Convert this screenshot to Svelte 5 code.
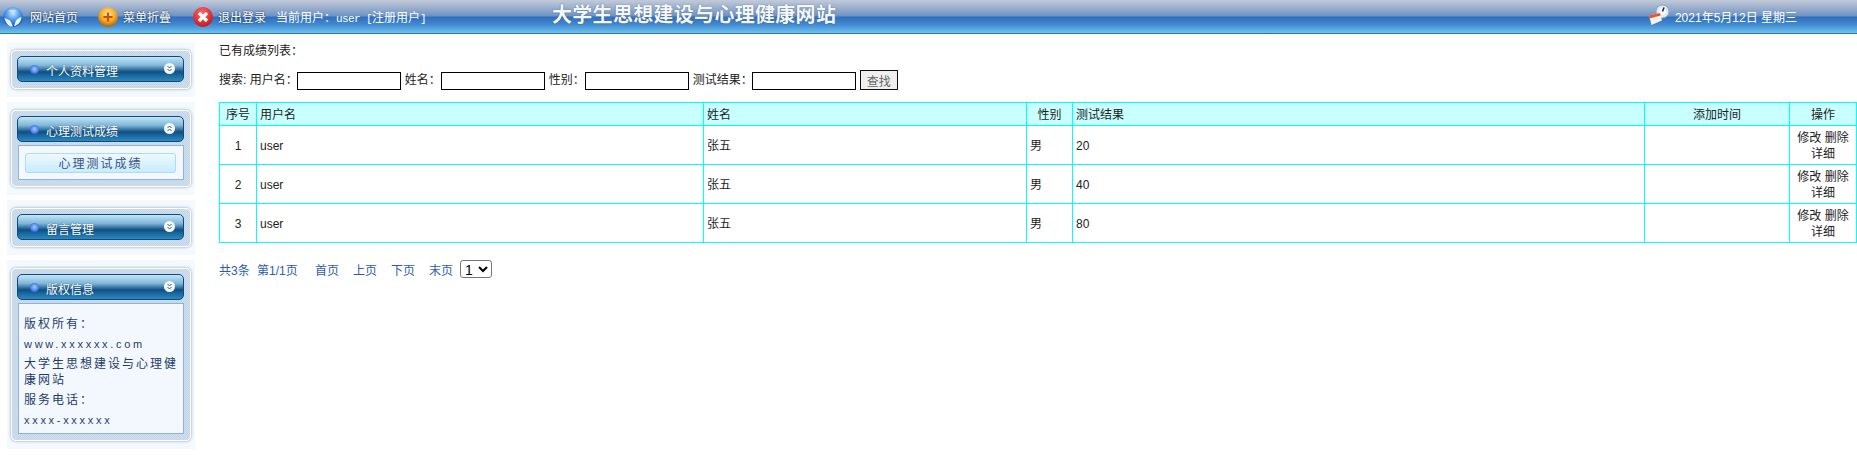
<script>
  let rows = [
    { id: 1, name: 'user', real: '张五', sex: '男', score: 20 },
    { id: 2, name: 'user', real: '张五', sex: '男', score: 40 },
    { id: 3, name: 'user', real: '张五', sex: '男', score: 80 }
  ];
</script>

{#snippet panelHead(title, up)}
  <div class="panel-head">
    <span class="dot"></span>
    <span class="panel-title">{title}</span>
    <svg class="chev" width="11" height="11" viewBox="0 0 11 11">
      <circle cx="5.5" cy="5.5" r="5.5" fill="#f4f8fb" />
      {#if up}
        <path d="M3.5 5 5.5 3 7.5 5M3.5 8 5.5 6 7.5 8" fill="none" stroke="#2f5f86" stroke-width="1" />
      {:else}
        <path d="M3.5 3 5.5 5 7.5 3M3.5 6 5.5 8 7.5 6" fill="none" stroke="#2f5f86" stroke-width="1" />
      {/if}
    </svg>
  </div>
{/snippet}

<header class="top">
  <nav class="nav">
    <a class="nav-item first" href="#home">
      <svg width="20" height="20" viewBox="0 0 20 20">
        <defs>
          <radialGradient id="globe" cx="0.5" cy="0.3" r="0.75">
            <stop offset="0" stop-color="#cfe8ff" />
            <stop offset="0.45" stop-color="#4f9cf0" />
            <stop offset="1" stop-color="#0d3aa6" />
          </radialGradient>
        </defs>
        <circle cx="10" cy="10" r="10" fill="url(#globe)" />
        <path d="M1.5 11c2.500 1 5 1.500 6.500 4l2 4.500c-3.500 .5-7-2-8.500-8.500Z" fill="#e8f3ff" />
        <path d="M18.500 10c-2 .5-4 1.500-5.500 3.500l-2 5.500c4-.5 7-4 7.500-9Z" fill="#e8f3ff" />
        <path d="M5 4c2-1.500 7-1.500 9 0-2 1-7 1-9 0Z" fill="#f4fbff" opacity=".6" />
      </svg>
      <span>网站首页</span>
    </a>
    <a class="nav-item second" href="#fold">
      <svg width="20" height="20" viewBox="0 0 20 20">
        <defs>
          <radialGradient id="orange" cx="0.5" cy="0.35" r="0.7">
            <stop offset="0" stop-color="#ffe9a0" />
            <stop offset="0.55" stop-color="#f5a623" />
            <stop offset="1" stop-color="#9a5208" />
          </radialGradient>
        </defs>
        <circle cx="10" cy="10" r="10" fill="url(#orange)" />
        <path d="M10 5.500v9M5.500 10h9" stroke="#c4540a" stroke-width="2.200" />
      </svg>
      <span>菜单折叠</span>
    </a>
    <a class="nav-item third" href="#logout">
      <svg width="20" height="20" viewBox="0 0 20 20">
        <defs>
          <radialGradient id="red" cx="0.45" cy="0.3" r="0.8">
            <stop offset="0" stop-color="#ff6a6a" />
            <stop offset="1" stop-color="#c00a14" />
          </radialGradient>
        </defs>
        <circle cx="10" cy="10" r="10" fill="url(#red)" />
        <path d="M6 6l8 8M14 6l-8 8" stroke="#fff" stroke-width="3.200" />
      </svg>
      <span>退出登录</span>
    </a>
    <span class="who">当前用户：<span class="mono">user [</span>注册用户<span class="mono">]</span></span>
  </nav>
  <div class="site-title">大学生思想建设与心理健康网站</div>
  <div class="date">
    <svg width="22" height="22" viewBox="0 0 22 22">
      <circle cx="14.500" cy="7.500" r="6.500" fill="#dfe9f2" stroke="#8fa8bf" />
      <circle cx="14.500" cy="7.500" r="3.500" fill="#f7fbff" />
      <path d="M14.500 7.500 16 3.500" stroke="#223" stroke-width="1.500" />
      <path d="M1 11.500 12 9l2 7.500-10.500 4.500Z" fill="#f4f2ec" />
      <path d="M1 11.500 12 9l.7 2.600L1.700 14.500Z" fill="#e8562a" />
    </svg>
    <span>2021年5月12日 星期三</span>
  </div>
</header>

<div class="page">
  <aside class="side">
    <section class="panel">
      <div class="panel-inner">{@render panelHead('个人资料管理', false)}</div>
    </section>
    <section class="panel">
      <div class="panel-inner">
        {@render panelHead('心理测试成绩', true)}
        <div class="panel-body links">
          <a class="side-link" href="#score">心理测试成绩</a>
        </div>
      </div>
    </section>
    <section class="panel">
      <div class="panel-inner">{@render panelHead('留言管理', false)}</div>
    </section>
    <section class="panel">
      <div class="panel-inner">
        {@render panelHead('版权信息', false)}
        <div class="panel-body info">
          <p>版权所有：</p>
          <p class="latin">www.xxxxxx.com</p>
          <p class="wrap">大学生思想建设与心理健康网站</p>
          <p>服务电话：</p>
          <p class="latin">xxxx-xxxxxx</p>
        </div>
      </div>
    </section>
  </aside>

  <main class="content">
    <div class="caption">已有成绩列表：</div>
    <form class="search">
      <label>搜索: 用户名：<input class="tight" type="text" /></label>
      <label>姓名：<input type="text" /></label>
      <label>性别：<input type="text" /></label>
      <label>测试结果：<input class="tight" type="text" /></label>
      <button type="button">查找</button>
    </form>

    <table>
      <colgroup>
        <col style="width:37px" />
        <col style="width:447px" />
        <col style="width:323px" />
        <col style="width:46px" />
        <col style="width:572px" />
        <col style="width:145px" />
        <col style="width:67px" />
      </colgroup>
      <thead>
        <tr>
          <th class="center">序号</th>
          <th>用户名</th>
          <th>姓名</th>
          <th class="center">性别</th>
          <th>测试结果</th>
          <th class="center">添加时间</th>
          <th class="center">操作</th>
        </tr>
      </thead>
      <tbody>
        {#each rows as row}
          <tr>
            <td class="center">{row.id}</td>
            <td>{row.name}</td>
            <td>{row.real}</td>
            <td>{row.sex}</td>
            <td>{row.score}</td>
            <td></td>
            <td class="center ops">修改 删除 详细</td>
          </tr>
        {/each}
      </tbody>
    </table>

    <div class="pager">
      <span class="count">共3条</span>
      <span class="page-no">第1/1页</span>
      <a href="#first">首页</a>
      <a href="#prev">上页</a>
      <a href="#next">下页</a>
      <a href="#last">末页</a>
      <select>
        <option>1</option>
      </select>
    </div>
  </main>
</div>

<style>
  :global(body) {
    margin: 0;
    background: #fff;
    color: #222;
    font-family: "Liberation Sans", "Noto Sans CJK SC", sans-serif;
    font-size: 12px;
  }

  /* top bar */
  .top {
    height: 33px;
    display: flex;
    align-items: center;
    border-bottom: 1px solid #2f7f8f;
    background: linear-gradient(180deg, #c3cad9 0, #6f92c3 16px, #2f6fbf 17px, #3f86cf 24px, #6cc3ef 33px);
  }

  .nav {
    display: flex;
    align-items: center;
    width: 552px;
    flex: none;
    color: #fff;
  }

  .nav-item {
    display: flex;
    align-items: center;
    color: #fff;
    text-decoration: none;
    text-shadow: 0 0 2px #123;
  }

  .nav-item svg { flex: none; }

  .first { margin-left: 3px; gap: 7px; width: 95px; }
  .second { gap: 5px; width: 95px; }
  .third { gap: 5px; width: 83px; }

  .who { white-space: pre; }
  .mono { font-family: "Liberation Mono", monospace; font-size: 11px; letter-spacing: -0.6px; }

  .site-title {
    font-size: 20px;
    letter-spacing: 0.3px;
    font-weight: 700;
    color: #f4f8fc;
    white-space: nowrap;
    line-height: 1;
    margin-top: -3px;
    text-shadow: 0 0 1px #345;
  }

  .date {
    margin-left: auto;
    margin-right: 60px;
    display: flex;
    align-items: center;
    gap: 5px;
    color: #fff;
    white-space: pre;
  }

  .date svg { margin-top: -4px; }

  .page {
    display: flex;
    align-items: flex-start;
  }

  /* left column */
  .side {
    width: 188px;
    flex: none;
    margin: 8px 0 0 7px;
    display: flex;
    flex-direction: column;
    gap: 5px;
  }

  .panel {
    background: #f3f9fe;
    padding: 8px 4px;
  }

  .panel-inner {
    padding: 5px 6px 6px 5px;
    border: 1px solid #fff;
    border-radius: 5px;
    box-shadow: 0 0 3px #8b97a5;
    background: repeating-conic-gradient(#c2d5e9 0 25%, #d0dfee 0 50%) 0 0 / 2px 2px;
  }

  .panel-head {
    height: 24px;
    display: flex;
    align-items: center;
    padding: 0 8px 0 12px;
    border: 1px solid #0d4a7d;
    border-radius: 5px;
    background: linear-gradient(180deg, #c2e6f6 0, #7fb6d8 35%, #0f4f83 62%, #1a6aa0 78%, #2b88bf 100%);
  }

  .dot {
    width: 9px;
    height: 9px;
    border-radius: 50%;
    background: radial-gradient(circle at 50% 45%, #a8cdfb 0, #5a90f2 45%, #1d3fc4 100%);
    flex: none;
  }

  .panel-title {
    margin-left: 7px;
    color: #fff;
    line-height: 1;
    margin-top: 6px;
    text-shadow: 0 0 1px #0b3a60;
  }

  .chev { margin-left: auto; margin-top: -1px; flex: none; }

  .panel-body {
    margin: 3px 0 0 1px;
    background: #f3f8ff;
    border: 1px solid #8fb3d4;
    box-sizing: border-box;
  }

  .links { height: 35px; padding: 7px 7px 6px 6px; }

  .side-link {
    display: block;
    height: 20px;
    line-height: 21px;
    box-sizing: border-box;
    border: 1px solid #abdcf6;
    border-radius: 3px;
    background: linear-gradient(180deg, #eef9fe, #c8ecfb);
    text-align: center;
    color: #3a4f8c;
    letter-spacing: 2px;
    text-decoration: none;
  }

  .info {
    height: 131px;
    padding: 12px 0 0 5px;
    color: #1f3c68;
    letter-spacing: 2px;
  }

  .info p { margin: 0 0 4px; line-height: 16px; }
  .info .latin { margin: 4px 0 4px; font-size: 11px; letter-spacing: 2.7px; }

  /* right content */
  .content {
    width: 1638px;
    margin-left: 24px;
  }

  .caption {
    margin-top: 9px;
    height: 16px;
    line-height: 16px;
  }

  .search {
    display: flex;
    align-items: flex-end;
    gap: 4px;
    margin-top: 11px;
    height: 20px;
  }

  .search label {
    display: flex;
    align-items: flex-start;
    line-height: 16px;
    white-space: nowrap;
  }

  .search input {
    width: 104px;
    height: 18px;
    box-sizing: border-box;
    border: 1px solid #000;
    border-radius: 0;
    margin: 0;
    padding: 0 2px;
    background: #fff;
  }

  .search input.tight { margin-left: -1px; }

  .search button {
    width: 38px;
    height: 20px;
    padding: 0;
    box-sizing: border-box;
    border: 1px solid #111;
    background: #efefef;
    color: #666;
    font: inherit;
  }

  table {
    margin-top: 12px;
    width: 1638px;
    table-layout: fixed;
    border-collapse: collapse;
    border: 1px solid #00ffff;
  }

  th, td {
    border: 1px solid #00ffff;
    padding: 2px 2px 0 3px;
    text-align: left;
    font-weight: 400;
    line-height: 16px;
    overflow: hidden;
  }

  th { background: #c8ffff; height: 20px; }
  td { height: 36px; }
  .center { text-align: center; padding-left: 2px; }
  .ops { padding: 1px 6px 0; }

  .pager {
    display: flex;
    align-items: center;
    margin-top: 17px;
    height: 18px;
    color: #2a5db0;
  }

  .count { width: 38px; flex: none; }
  .page-no { width: 58px; flex: none; }
  .pager a { color: #2a5db0; text-decoration: none; width: 24px; margin-right: 14px; flex: none; }
  .pager a:last-of-type { margin-right: 7px; }

  .pager select {
    width: 32px;
    height: 18px;
    font-size: 14px;
    font-family: inherit;
    padding: 0;
    border: 1px solid #767676;
    border-radius: 3px;
    background: #fff;
    color: #000;
  }
</style>
